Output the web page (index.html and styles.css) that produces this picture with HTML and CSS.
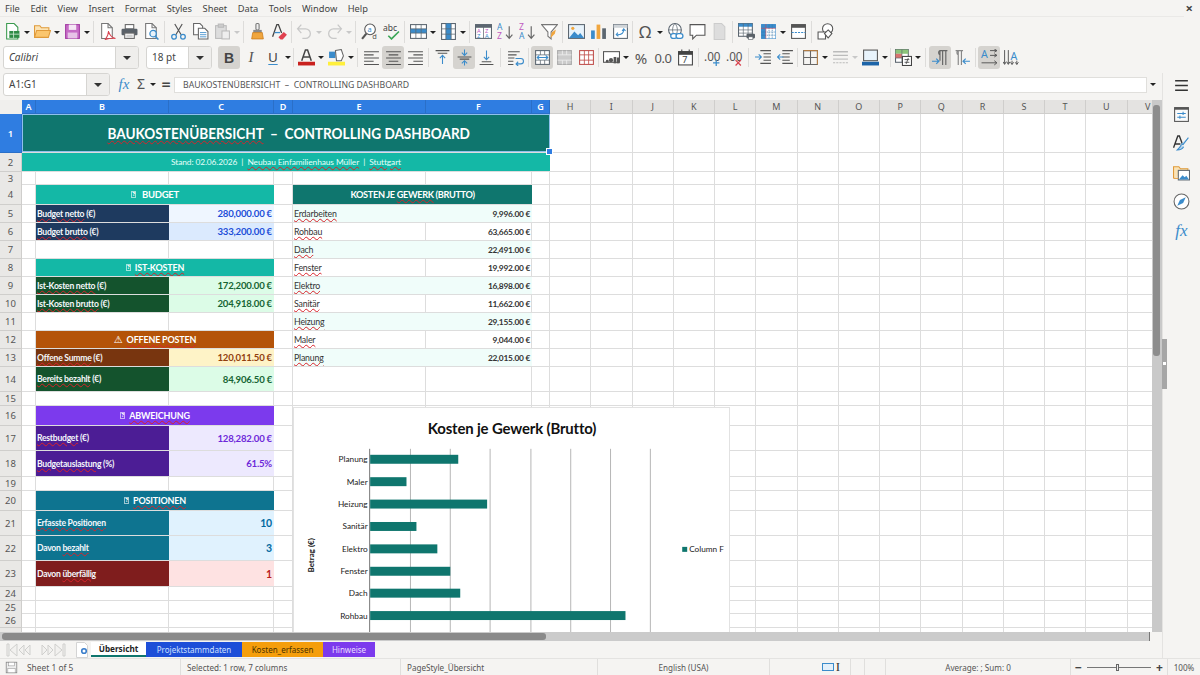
FILE: index.html
```html
<!DOCTYPE html>
<html lang="en">
<head>
  <meta charset="UTF-8">
  <meta name="viewport" content="width=device-width, initial-scale=1.0">
  <title>Baukostenübersicht - Calc</title>
  <link rel="stylesheet" href="styles.css">
</head>
<body>

  <!-- Icon set -->
  <svg class="defs" xmlns="http://www.w3.org/2000/svg">
    <symbol id="new" viewBox="0 0 16 16"><path d="M2.500 .5h7l3.500 3.500v11h-10.500z" fill="#fff" stroke="#3a9a4e"/><rect x="5" y="7.500" width="9.500" height="6.500" fill="#2e8b45"/><path d="M5 10.500h9.500M9 7.500v6.500" stroke="#cfe9d5" stroke-width=".8"/></symbol>
    <symbol id="open" viewBox="0 0 16 16"><path d="M.5 13.500v-11h5l1.500 2h7v3" fill="#fbe3b5" stroke="#e09a3a"/><path d="M.5 13.500l2-6.500h13l-2 6.500z" fill="#fbc66e" stroke="#e09a3a"/></symbol>
    <symbol id="save" viewBox="0 0 16 16"><rect x="1.500" y="1.500" width="13" height="13" fill="#c66cc6" stroke="#a33ea3"/><rect x="4.500" y="1.500" width="7" height="5" fill="#f5e6f5"/><rect x="3.500" y="9" width="9" height="5.500" fill="#e7c3e7"/></symbol>
    <symbol id="pdf" viewBox="0 0 16 16"><path d="M2.500 .5h6l4 4v10h-10z" fill="#fff" stroke="#777"/><path d="M8.500 .5v4h4" fill="none" stroke="#777"/><path d="M6 15.500c2-3 3-5 3-8 .5 3 3 6 6.500 7-3.500-.5-6.500 0-9.500 1z" fill="none" stroke="#d8434f"/></symbol>
    <symbol id="print" viewBox="0 0 16 16"><rect x="4" y="1.500" width="8" height="4" fill="#fff" stroke="#666"/><rect x=".5" y="5.500" width="15" height="6" rx="1" fill="#5a6168"/><rect x="3.500" y="9.500" width="9" height="5" fill="#fff" stroke="#666"/><path d="M5 11.500h6M5 13h6" stroke="#aaa" stroke-width=".7"/></symbol>
    <symbol id="prev" viewBox="0 0 16 16"><path d="M2.500 .5h6l4 4v10h-10z" fill="#fff" stroke="#777"/><path d="M8.500 .5v4h4" fill="none" stroke="#777"/><circle cx="9.500" cy="10" r="3" fill="#e8f3fb" stroke="#3b8ccb" stroke-width="1.200"/><path d="M11.500 12.500l3 3" stroke="#3b8ccb" stroke-width="1.500"/></symbol>
    <symbol id="cut" viewBox="0 0 16 16"><path d="M4.500 1l6 10M11.500 1l-6 10" stroke="#555" stroke-width="1.100"/><circle cx="3.800" cy="13" r="2.200" fill="none" stroke="#3b8ccb" stroke-width="1.200"/><circle cx="12.200" cy="13" r="2.200" fill="none" stroke="#3b8ccb" stroke-width="1.200"/></symbol>
    <symbol id="copy" viewBox="0 0 16 16"><path d="M1.500 .5h6l2.500 2.500v8h-8.500z" fill="#fff" stroke="#666"/><path d="M6 5h6l3 3v7h-9z" fill="#fff" stroke="#666"/><path d="M7.500 9h6M7.500 11h6M7.500 13h6" stroke="#3b8ccb" stroke-width=".8"/></symbol>
    <symbol id="paste" viewBox="0 0 16 16"><rect x="1.500" y="2.500" width="10" height="12" fill="#ddd" stroke="#bbb"/><rect x="4" y="1" width="5" height="3" fill="#ccc" stroke="#bbb"/><rect x="7.500" y="7.500" width="7" height="7.500" fill="#eee" stroke="#bbb"/></symbol>
    <symbol id="clone" viewBox="0 0 16 16"><rect x="6.500" y=".5" width="3" height="6" rx="1" fill="#eee" stroke="#777"/><rect x="4" y="6.500" width="8" height="2.500" fill="#8a8a8a"/><path d="M3.500 9h9l1 6h-11z" fill="#f0a63e" stroke="#c97a18" stroke-width=".7"/></symbol>
    <symbol id="clear" viewBox="0 0 16 16"><path d="M1.500 13l4-11.500h1.500l3 8" fill="none" stroke="#444" stroke-width="1.200"/><path d="M3.500 9h5" stroke="#3b8ccb" stroke-width="1.200"/><path d="M7 13.500l5-5 3 2.500-4 4.500H9z" fill="#e0414f"/></symbol>
    <symbol id="undo" viewBox="0 0 16 16"><path d="M5 1.500l-3.500 4 3.500 4M2 5.500h7a4.500 4.500 0 0 1 0 9H6" fill="none" stroke="#c8c8c8" stroke-width="1.200"/></symbol>
    <symbol id="redo" viewBox="0 0 16 16"><path d="M11 1.500l3.500 4-3.500 4M14 5.500H7a4.500 4.500 0 0 0 0 9h3" fill="none" stroke="#c8c8c8" stroke-width="1.200"/></symbol>
    <symbol id="find" viewBox="0 0 16 16"><circle cx="8.500" cy="6" r="5" fill="#fff" stroke="#555"/><path d="M5 10l-4 5" stroke="#555" stroke-width="2"/><text x="6.200" y="8.200" font-size="7" fill="#3b8ccb" font-family="Noto Sans">a</text><text x="10.500" y="15.500" font-size="7" fill="#555" font-family="Noto Sans">d</text></symbol>
    <symbol id="spell" viewBox="0 0 16 16"><text x="0" y="7.500" font-size="8" fill="#444" font-family="Noto Sans">abc</text><path d="M5 12l3 3 7-7" fill="none" stroke="#3aa655" stroke-width="1.500"/></symbol>
    <symbol id="row" viewBox="0 0 16 16"><rect x=".5" y="1.500" width="15" height="13" fill="#fff" stroke="#5c6670"/><rect x=".5" y="5.500" width="15" height="4" fill="#3b8ccb"/><path d="M.5 5.500h15M.5 9.500h15M5.500 1.500v13M10.500 1.500v13" stroke="#5c6670" stroke-width=".7"/></symbol>
    <symbol id="col" viewBox="0 0 16 16"><rect x="1.500" y=".5" width="13" height="15" fill="#fff" stroke="#5c6670"/><rect x="5.500" y=".5" width="5" height="15" fill="#3b8ccb"/><path d="M1.500 5.500h13M1.500 10.500h13M5.500 .5v15M10.500 .5v15" stroke="#5c6670" stroke-width=".7"/></symbol>
    <symbol id="sort" viewBox="0 0 16 16"><rect x=".5" y="1.500" width="15" height="13" fill="#fff" stroke="#5c6670"/><rect x=".5" y="1.500" width="15" height="3" fill="#5c6670"/><path d="M8 1.500v13" stroke="#5c6670" stroke-width=".7"/><text x="1.800" y="9.500" font-size="5.500" fill="#c05ac0" font-family="Noto Sans">A</text><text x="9.300" y="9.500" font-size="5.500" fill="#c05ac0" font-family="Noto Sans">Z</text><text x="1.800" y="14" font-size="5.500" fill="#3b8ccb" font-family="Noto Sans">Z</text><text x="9.300" y="14" font-size="5.500" fill="#3b8ccb" font-family="Noto Sans">A</text></symbol>
    <symbol id="asc" viewBox="0 0 16 16"><text x="0" y="7" font-size="8" fill="#3b8ccb" font-family="Noto Sans">A</text><text x="0" y="15.500" font-size="8" fill="#c05ac0" font-family="Noto Sans">Z</text><path d="M11.500 3v11M8.500 11l3 3.500 3-3.500" fill="none" stroke="#666" stroke-width="1.100"/></symbol>
    <symbol id="desc" viewBox="0 0 16 16"><text x="0" y="7" font-size="8" fill="#c05ac0" font-family="Noto Sans">Z</text><text x="0" y="15.500" font-size="8" fill="#3b8ccb" font-family="Noto Sans">A</text><path d="M11.500 3v11M8.500 11l3 3.500 3-3.500" fill="none" stroke="#666" stroke-width="1.100"/></symbol>
    <symbol id="filter" viewBox="0 0 16 16"><path d="M.5 1.500h15l-6 7v6.500l-3-2.500v-4z" fill="#fff" stroke="#777"/><path d="M9 14l1-5 4-3-1 4z" fill="#f0a63e"/></symbol>
    <symbol id="image" viewBox="0 0 16 16"><rect x=".5" y="1.500" width="15" height="13" fill="#e8f3fb" stroke="#5c6670"/><circle cx="4.500" cy="5" r="1.500" fill="#f0a63e"/><path d="M1 14l5-6 3.500 3.500 2-2 3.500 4.500z" fill="#3b8ccb"/></symbol>
    <symbol id="chart" viewBox="0 0 16 16"><rect x="1" y="7" width="3.500" height="8" fill="#3b8ccb"/><rect x="6.200" y="1.500" width="3.500" height="13.500" fill="#f0a63e"/><rect x="11.500" y="5" width="3.500" height="10" fill="#5c6670"/></symbol>
    <symbol id="pivot" viewBox="0 0 16 16"><rect x="1.500" y="1.500" width="13" height="13" fill="#fff" stroke="#5c6670"/><rect x="1.500" y="1.500" width="13" height="3" fill="#cfd4d8"/><path d="M5 11c4 0 6-2 6-5M9.500 7.500L11 5.500l1.700 2M5.500 9l-1.500 2 2 1.500" fill="none" stroke="#3b8ccb"/></symbol>
    <symbol id="link" viewBox="0 0 16 16"><circle cx="7.500" cy="6.500" r="6" fill="#fff" stroke="#5c6670"/><path d="M1.500 6.500h12M7.500 .5c-3 3-3 9 0 12M7.500 .5c3 3 3 9 0 12" fill="none" stroke="#5c6670" stroke-width=".7"/><rect x="3.500" y="10" width="6" height="4.500" rx="2.200" fill="#fff" stroke="#3b8ccb" stroke-width="1.200"/><rect x="8.500" y="10" width="6.500" height="4.500" rx="2.200" fill="#fff" stroke="#3b8ccb" stroke-width="1.200"/></symbol>
    <symbol id="note" viewBox="0 0 16 16"><path d="M1 1.500h14v10H7l-3.500 3.500v-3.500H1z" fill="#fff" stroke="#555"/></symbol>
    <symbol id="hdr" viewBox="0 0 16 16"><path d="M3 .5h7l3 3v12H3z" fill="#ddd" stroke="#ccc"/></symbol>
    <symbol id="area" viewBox="0 0 16 16"><rect x=".5" y=".5" width="13" height="12" fill="#fff" stroke="#5c6670"/><rect x=".5" y=".5" width="13" height="3" fill="#3b8ccb"/><path d="M.5 6.500h13M.5 9.500h13M5 .5v12M9.500 .5v12" stroke="#5c6670" stroke-width=".6"/><rect x="8" y="10" width="8" height="4.500" rx="1" fill="#5a6168"/><rect x="10" y="13" width="4" height="2.500" fill="#fff" stroke="#5a6168" stroke-width=".6"/></symbol>
    <symbol id="freeze" viewBox="0 0 16 16"><rect x="1.500" y="1.500" width="13" height="13" fill="#3b8ccb" stroke="#3b8ccb"/><rect x="5.500" y="5" width="9" height="9.500" fill="#fff"/><path d="M1.500 8.500h13M1.500 11.500h13M8.500 1.500v13M11.500 1.500v13" stroke="#2a6ea3" stroke-width=".6" stroke-dasharray="1 .7"/><path d="M1 5h14M5.500 1v14" stroke="#d8434f" stroke-width=".7" opacity=".7"/></symbol>
    <symbol id="split" viewBox="0 0 16 16"><rect x="1.500" y="1.500" width="13" height="13" fill="#fff" stroke="#555"/><rect x="1.500" y="1.500" width="13" height="3" fill="#555"/><path d="M1.500 9h13" stroke="#3b8ccb" stroke-dasharray="2 1"/></symbol>
    <symbol id="shapes" viewBox="0 0 16 16"><circle cx="10" cy="5.500" r="4.800" fill="#fff" stroke="#555"/><path d="M1 8.500h7v6.500H1z" fill="#fff" stroke="#555"/><path d="M10.500 6.500l3.500 3.500-3.500 4-3.500-4z" fill="#fff" stroke="#555"/></symbol>

    <symbol id="fcolor" viewBox="0 0 16 16"><path d="M3.500 11l3.500-10h2l3.500 10M5 7.500h6" fill="none" stroke="#444" stroke-width="1.400"/><rect x="0" y="12" width="16" height="3.500" fill="#c9211e"/></symbol>
    <symbol id="bcolor" viewBox="0 0 16 16"><rect x="0" y="12" width="16" height="3.500" fill="#ffef3b"/><rect x="1" y="2.500" width="6" height="6" fill="#3b8ccb"/><path d="M7 1.500l5.500-1 2 6-2 4.500H8z" fill="#fff" stroke="#666"/></symbol>
    <symbol id="al" viewBox="0 0 16 16"><path d="M1 2.500h14M1 5.500h9M1 8.500h14M1 11.500h9M1 14.500h14" stroke="#555"/></symbol>
    <symbol id="ac" viewBox="0 0 16 16"><path d="M1 2.500h14M3.500 5.500h9M1 8.500h14M3.500 11.500h9M1 14.500h14" stroke="#555"/></symbol>
    <symbol id="ar" viewBox="0 0 16 16"><path d="M1 2.500h14M6 5.500h9M1 8.500h14M6 11.500h9M1 14.500h14" stroke="#555"/></symbol>
    <symbol id="vt" viewBox="0 0 16 16"><path d="M1.500 1.500h13M3.500 4h9" stroke="#555"/><path d="M8 14V6M5.500 8.500L8 6l2.500 2.500" fill="none" stroke="#3b8ccb"/></symbol>
    <symbol id="vc" viewBox="0 0 16 16"><path d="M1.500 7.500h13M3.500 9.500h9" stroke="#555"/><path d="M8 .5v5M5.500 3.500L8 6l2.500-2.500M8 15.500v-4.500M5.500 13.500L8 11l2.500 2.500" fill="none" stroke="#3b8ccb"/></symbol>
    <symbol id="vb" viewBox="0 0 16 16"><path d="M1.500 14.500h13M3.500 12h9" stroke="#555"/><path d="M8 1.500v8M5.500 7.500L8 10l2.500-2.500" fill="none" stroke="#3b8ccb"/></symbol>
    <symbol id="wrap" viewBox="0 0 16 16"><path d="M1 2.500h11M1 5.500h8M1 8.500h6M1 11.500h5M1 14.500h5" stroke="#555"/><path d="M8 9h5a2.500 2.500 0 0 1 0 5H8.500M10.500 12l-2 2 2 2" fill="none" stroke="#3b8ccb"/></symbol>
    <symbol id="merge" viewBox="0 0 16 16"><rect x="1.500" y="1.500" width="13" height="13" fill="#fff" stroke="#5c6670"/><path d="M1.500 5.500h13M1.500 10.500h13M6 1.500v4M10 1.500v4M6 10.500v4M10 10.500v4" stroke="#5c6670" stroke-width=".7"/><path d="M3 8h10M5 6l-2 2 2 2M11 6l2 2-2 2" fill="none" stroke="#3b8ccb"/></symbol>
    <symbol id="merge2" viewBox="0 0 16 16"><rect x="1.500" y="1.500" width="13" height="13" fill="#ccc" stroke="#aaa"/><path d="M1.500 5.500h13M1.500 10.500h13M6 1.500v4M10 1.500v4M6 10.500v4M10 10.500v4" stroke="#eee" stroke-width=".8"/></symbol>
    <symbol id="unmerge" viewBox="0 0 16 16"><rect x="1.500" y="1.500" width="13" height="13" fill="#fff" stroke="#c0504d"/><path d="M1.500 5.500h13M1.500 10.500h13M6 1.500v13M10 1.500v13" stroke="#c0504d" stroke-width=".8"/></symbol>
    <symbol id="money" viewBox="0 0 16 16"><rect x=".5" y="2.500" width="15" height="10" fill="#fff" stroke="#555"/><circle cx="7.500" cy="10.500" r="2" fill="#555"/><rect x="10" y="7.500" width="2.500" height="6" fill="#555"/><rect x="13" y="8" width="2.500" height="5.500" fill="#555"/><circle cx="4" cy="11.500" r="1.300" fill="#555"/></symbol>
    <symbol id="date" viewBox="0 0 16 16"><rect x="1.500" y="2.500" width="13" height="12.500" fill="#fff" stroke="#444"/><path d="M1.500 2.500h13v2.500h-13zM4.500 .5v3M11.500 .5v3" fill="#444" stroke="#444"/><text x="5" y="13.500" font-size="8.500" fill="#444" font-family="Noto Sans">7</text></symbol>
    <symbol id="addd" viewBox="0 0 16 16"><text x="0" y="11" font-size="11" fill="#555" font-family="Noto Sans">.00</text><path d="M11.500 10v6M8.500 13h6" stroke="#3b8ccb" stroke-width="1.200"/></symbol>
    <symbol id="deld" viewBox="0 0 16 16"><text x="0" y="11" font-size="11" fill="#555" font-family="Noto Sans">.00</text><path d="M9 10.500l5 5M14 10.500l-5 5" stroke="#d8434f" stroke-width="1.200"/></symbol>
    <symbol id="ind" viewBox="0 0 16 16"><path d="M5 1.500h10M8 4.500h7M8 7.500h7M8 10.500h7M5 13.500h10" stroke="#555"/><path d="M0 7.500h5.500M3.500 5l2.500 2.500-2.500 2.500" fill="none" stroke="#3b8ccb"/></symbol>
    <symbol id="outd" viewBox="0 0 16 16"><path d="M1 1.500h10M1 4.500h7M1 7.500h7M1 10.500h7M1 13.500h10" stroke="#555" transform="translate(4 0)"/><path d="M6 7.500H.5M3 5L.5 7.500 3 10" fill="none" stroke="#3b8ccb"/></symbol>
    <symbol id="border" viewBox="0 0 16 16"><path d="M1.500 1.500h13v13h-13zM8 1.500v13M1.500 8h13" fill="none" stroke="#666"/><path d="M1.500 1.500h13M14.500 1.500v13" fill="none" stroke="#c9833a" stroke-width=".8"/></symbol>
    <symbol id="lines" viewBox="0 0 16 16"><path d="M1 2.500h14M1 6h14" stroke="#bbb" stroke-width="1.400"/><path d="M1 9.500h14" stroke="#bbb"/><path d="M1 13h14" stroke="#bbb" stroke-dasharray="2 1"/></symbol>
    <symbol id="bordc" viewBox="0 0 16 16"><rect x="1.500" y="1" width="13" height="10" fill="#e8f3fb" stroke="#555"/><rect x="0" y="12" width="16" height="3.500" fill="#1c64a8"/></symbol>
    <symbol id="cond" viewBox="0 0 16 16"><rect x=".5" y=".5" width="12" height="12" fill="#fff" stroke="#5c6670"/><rect x=".5" y=".5" width="12" height="4" fill="#8cc47a"/><rect x=".5" y="4.500" width="6" height="4" fill="#d8746e"/><path d="M.5 8.500h12M6.500 .5v12" stroke="#5c6670" stroke-width=".6"/><rect x="7" y="7" width="8.500" height="8.500" fill="#fff" stroke="#444"/><path d="M9 10h4.500M9 12.500h4.500M12.500 8.500l-2 5.500" stroke="#444" stroke-width=".8"/></symbol>
    <symbol id="ltr" viewBox="0 0 16 16"><path d="M7.500 11V1.500h7M7.500 5.500a2.200 2.200 0 0 1 0-4M10 1.500V15M13 1.500V15" fill="none" stroke="#666" stroke-width="1.100"/><path d="M0 11.500h6M4 9l2.500 2.500L4 14" fill="none" stroke="#3b8ccb" stroke-width="1.100"/></symbol>
    <symbol id="rtl" viewBox="0 0 16 16"><path d="M1.500 1.500h7M4 5.500a2.200 2.200 0 0 1 0-4M4 1.500V15M7 1.500V15" fill="none" stroke="#888" stroke-width="1.100"/><path d="M15 11.500H9M11 9l-2.500 2.500L11 14" fill="none" stroke="#3b8ccb" stroke-width="1.100"/></symbol>
    <symbol id="lr" viewBox="0 0 16 16"><text x="0" y="8.500" font-size="10" fill="#3b8ccb" font-family="Noto Sans">A</text><path d="M8.500 1.500h6.500M12.500 0l2.500 1.500-2.500 1.500M8.500 6h6.500M12.500 4.500l2.500 1.500-2.500 1.500M.5 13h14M12.500 11l2.500 2-2.500 2" fill="none" stroke="#555" stroke-width=".9"/></symbol>
    <symbol id="tb" viewBox="0 0 16 16"><text x="7" y="10" font-size="10" fill="#3b8ccb" font-family="Noto Sans">A</text><path d="M1.500 1v13M0 12l1.500 2.500L3 12M5 1v13M3.500 12l1.500 2.500L6.500 12M8.500 11v3.500M7 12.500l1.500 2 1.500-2M13 11v3.500M11.500 12.500l1.500 2 1.500-2" fill="none" stroke="#555" stroke-width=".9"/></symbol>

    <symbol id="menu3" viewBox="0 0 16 16"><path d="M2 3.500h12M2 8h12M2 12.500h12" stroke="#333" stroke-width="1.500"/></symbol>
    <symbol id="props" viewBox="0 0 16 16"><rect x="1.500" y="1.500" width="13" height="13" fill="#fafafa" stroke="#555"/><rect x="1.500" y="1.500" width="13" height="2" fill="#555"/><path d="M4 7h8M4 10.500h8" stroke="#3b8ccb"/><path d="M9.500 5.500v3M6.500 9v3" stroke="#3b8ccb"/></symbol>
    <symbol id="styl" viewBox="0 0 16 16"><path d="M.5 12L4.500 1h1.500l3 8M2 8.500h5" fill="none" stroke="#333" stroke-width="1.300"/><path d="M14.500 2.500L9.500 9 8 8M8 9c-1 2-1.500 3-4 5 3 0 5-1 6-3" fill="#b9d6ee" stroke="#3b8ccb"/></symbol>
    <symbol id="gall" viewBox="0 0 16 16"><path d="M.5 13.500v-11h5l1.500 2h7v3" fill="#fbe3b5" stroke="#e09a3a"/><rect x="5" y="6" width="10.500" height="9" fill="#fff" stroke="#5c6670"/><path d="M5.500 14.500l3.500-4 2 2 1.500-1.500 2.500 3.500z" fill="#3b8ccb"/><path d="M.5 13.500H5" stroke="#e09a3a"/></symbol>
    <symbol id="navi" viewBox="0 0 16 16"><circle cx="8" cy="8" r="7" fill="#fff" stroke="#666"/><path d="M12 4L9.500 9.500 4 12l2.500-5.500z" fill="#3b8ccb"/></symbol>
    <symbol id="stsave" viewBox="0 0 16 16"><rect x="1.500" y="1.500" width="13" height="13" fill="#eee" stroke="#888"/><rect x="4.500" y="1.500" width="7" height="4.500" fill="#fff" stroke="#888" stroke-width=".6"/><rect x="3.500" y="9" width="9" height="5.500" fill="#fff" stroke="#888" stroke-width=".6"/></symbol>
    <symbol id="addtab" viewBox="0 0 16 16"><path d="M2.500 .5h8l3 3v12h-11z" fill="#fff" stroke="#d4d4d4"/><circle cx="10" cy="9" r="2.300" fill="#fff" stroke="#3b7ecb" stroke-width="1.600"/></symbol>
    <symbol id="tabnav" viewBox="0 0 60 14"><g fill="#f2f1ef" stroke="#cfcfcd"><path d="M1 1h2v12H1zM11 1L4 7l7 6z"/><path d="M18 2l-5 5 5 5zM24 2l-5 5 5 5z"/><path d="M36 2l5 5-5 5zM42 2l5 5-5 5z"/><path d="M49 1l7 6-7 6zM57 1h2v12h-2z"/></g></symbol>
  </svg>

  <!-- Menu bar -->
  <div class="menubar">
    <span>File</span><span>Edit</span><span>View</span><span>Insert</span><span>Format</span><span>Styles</span><span>Sheet</span><span>Data</span><span>Tools</span><span>Window</span><span>Help</span>
    <span class="close">×</span>
  </div>

  <!-- Standard toolbar -->
  <div class="toolbar tb1">
    <span class="b"><svg><use href="#new"/></svg></span><span class="d"></span>
    <span class="b"><svg><use href="#open"/></svg></span><span class="d"></span>
    <span class="b"><svg><use href="#save"/></svg></span><span class="d"></span>
    <span class="s"></span>
    <span class="b"><svg><use href="#pdf"/></svg></span>
    <span class="b"><svg><use href="#print"/></svg></span>
    <span class="b"><svg><use href="#prev"/></svg></span>
    <span class="s"></span>
    <span class="b"><svg><use href="#cut"/></svg></span>
    <span class="b"><svg><use href="#copy"/></svg></span>
    <span class="b"><svg><use href="#paste"/></svg></span><span class="d off"></span>
    <span class="s"></span>
    <span class="b"><svg><use href="#clone"/></svg></span>
    <span class="b"><svg><use href="#clear"/></svg></span>
    <span class="s t"></span>
    <span class="b"><svg><use href="#undo"/></svg></span><span class="d off"></span>
    <span class="b"><svg><use href="#redo"/></svg></span><span class="d off"></span>
    <span class="s"></span>
    <span class="b"><svg><use href="#find"/></svg></span>
    <span class="b"><svg><use href="#spell"/></svg></span>
    <span class="s"></span>
    <span class="b"><svg><use href="#row"/></svg></span><span class="d"></span>
    <span class="b"><svg><use href="#col"/></svg></span><span class="d"></span>
    <span class="s"></span>
    <span class="b"><svg><use href="#sort"/></svg></span>
    <span class="b"><svg><use href="#asc"/></svg></span>
    <span class="b"><svg><use href="#desc"/></svg></span>
    <span class="b"><svg><use href="#filter"/></svg></span>
    <span class="s"></span>
    <span class="b"><svg><use href="#image"/></svg></span>
    <span class="b"><svg><use href="#chart"/></svg></span>
    <span class="b"><svg><use href="#pivot"/></svg></span>
    <span class="s t"></span>
    <span class="b omega">Ω</span><span class="d"></span>
    <span class="b"><svg><use href="#link"/></svg></span>
    <span class="b"><svg><use href="#note"/></svg></span>
    <span class="b"><svg><use href="#hdr"/></svg></span>
    <span class="s"></span>
    <span class="b"><svg><use href="#area"/></svg></span>
    <span class="b"><svg><use href="#freeze"/></svg></span><span class="d"></span>
    <span class="b"><svg><use href="#split"/></svg></span>
    <span class="s"></span>
    <span class="b"><svg><use href="#shapes"/></svg></span>
  </div>

  <!-- Formatting toolbar -->
  <div class="toolbar tb2">
    <span class="combo font"><i>Calibri</i><em></em></span>
    <span class="combo size"><i class="plain">18 pt</i><em></em></span>
    <span class="b on bold">B</span>
    <span class="b ital">I</span>
    <span class="b under">U</span><span class="d"></span>
    <span class="s t"></span>
    <span class="b"><svg><use href="#fcolor"/></svg></span><span class="d"></span>
    <span class="b"><svg><use href="#bcolor"/></svg></span><span class="d"></span>
    <span class="s"></span>
    <span class="b"><svg><use href="#al"/></svg></span>
    <span class="b on"><svg><use href="#ac"/></svg></span>
    <span class="b"><svg><use href="#ar"/></svg></span>
    <span class="s"></span>
    <span class="b"><svg><use href="#vt"/></svg></span>
    <span class="b on"><svg><use href="#vc"/></svg></span>
    <span class="b"><svg><use href="#vb"/></svg></span>
    <span class="s w"></span>
    <span class="b"><svg><use href="#wrap"/></svg></span>
    <span class="s"></span>
    <span class="b on"><svg><use href="#merge"/></svg></span>
    <span class="b"><svg><use href="#merge2"/></svg></span>
    <span class="b"><svg><use href="#unmerge"/></svg></span>
    <span class="s t"></span>
    <span class="b"><svg><use href="#money"/></svg></span><span class="d"></span>
    <span class="b percent">%</span>
    <span class="b zero">0.0</span>
    <span class="b"><svg><use href="#date"/></svg></span>
    <span class="s"></span>
    <span class="b"><svg><use href="#addd"/></svg></span>
    <span class="b"><svg><use href="#deld"/></svg></span>
    <span class="s w"></span>
    <span class="b"><svg><use href="#ind"/></svg></span>
    <span class="b"><svg><use href="#outd"/></svg></span>
    <span class="s t"></span>
    <span class="b"><svg><use href="#border"/></svg></span><span class="d"></span>
    <span class="b"><svg><use href="#lines"/></svg></span><span class="d off"></span>
    <span class="b"><svg><use href="#bordc"/></svg></span><span class="d"></span>
    <span class="s t"></span>
    <span class="b"><svg><use href="#cond"/></svg></span><span class="d"></span>
    <span class="s w"></span>
    <span class="b on"><svg><use href="#ltr"/></svg></span>
    <span class="b"><svg><use href="#rtl"/></svg></span>
    <span class="s"></span>
    <span class="b on"><svg><use href="#lr"/></svg></span>
    <span class="b"><svg><use href="#tb"/></svg></span>
  </div>

  <div class="work">
    <div class="main">

      <!-- Formula bar -->
      <div class="formula">
        <span class="combo name"><i class="plain">A1:G1</i><em></em></span>
        <span class="f-fx">fx</span>
        <span class="f-sum">Σ</span><span class="d"></span>
        <span class="f-eq">=</span>
        <span class="f-input">BAUKOSTENÜBERSICHT  –  CONTROLLING DASHBOARD</span>
        <span class="d f-more"></span>
      </div>

      <!-- Sheet -->
      <div class="sheet-wrap">
        <div class="sheet">
          <div class="row colhead">
            <div class="corner"></div>
            <div class="ch sel">A</div><div class="ch sel">B</div><div class="ch sel">C</div><div class="ch sel">D</div><div class="ch sel">E</div><div class="ch sel">F</div><div class="ch sel">G</div>
            <div class="ch">H</div><div class="ch">I</div><div class="ch">J</div><div class="ch">K</div><div class="ch">L</div><div class="ch">M</div><div class="ch">N</div><div class="ch">O</div><div class="ch">P</div><div class="ch">Q</div><div class="ch">R</div><div class="ch">S</div><div class="ch">T</div><div class="ch">U</div><div class="ch">V</div>
          </div>

          <div class="row h39">
            <div class="rh sel">1</div>
            <div class="cell span-ag title"><span class="narrow"><span class="sp">BAUKOSTENÜBERSICHT</span>  –  CONTROLLING DASHBOARD</span></div>
          </div>
          <div class="row h19">
            <div class="rh">2</div>
            <div class="cell span-ag sub">Stand: 02.06.2026  |  <span class="sp">Neubau Einfamilienhaus Müller</span>  |  <span class="sp">Stuttgart</span></div>
          </div>
          <div class="row h13"><div class="rh">3</div></div>
          <div class="row h20">
            <div class="rh">4</div>
            <div class="cell span-bc head teal"><b class="tofu">?</b> BUDGET</div>
            <div class="cell span-ef head dteal small2"><span>KOSTEN JE <span class="sp">GEWERK</span> (BRUTTO)</span></div>
          </div>
          <div class="row">
            <div class="rh">5</div>
            <div class="cell col-b lab navy"><span class="sp">Budget netto</span> (€)</div>
            <div class="cell col-c val blue1">280,000.00 €</div>
            <div class="cell col-e item mint"><span class="sp">Erdarbeiten</span></div>
            <div class="cell col-f amt mint">9,996.00 €</div>
          </div>
          <div class="row">
            <div class="rh">6</div>
            <div class="cell col-b lab navy"><span class="sp">Budget brutto</span> (€)</div>
            <div class="cell col-c val blue2">333,200.00 €</div>
            <div class="cell col-e item"><span class="sp">Rohbau</span></div>
            <div class="cell col-f amt">63,665.00 €</div>
          </div>
          <div class="row">
            <div class="rh">7</div>
            <div class="cell col-e item mint"><span class="sp">Dach</span></div>
            <div class="cell col-f amt mint">22,491.00 €</div>
          </div>
          <div class="row">
            <div class="rh">8</div>
            <div class="cell span-bc head teal small"><b class="tofu">?</b> <span class="sp">IST-KOSTEN</span></div>
            <div class="cell col-e item"><span class="sp">Fenster</span></div>
            <div class="cell col-f amt">19,992.00 €</div>
          </div>
          <div class="row">
            <div class="rh">9</div>
            <div class="cell col-b lab forest"><span class="sp">Ist-Kosten netto</span> (€)</div>
            <div class="cell col-c val green">172,200.00 €</div>
            <div class="cell col-e item mint"><span class="sp">Elektro</span></div>
            <div class="cell col-f amt mint">16,898.00 €</div>
          </div>
          <div class="row">
            <div class="rh">10</div>
            <div class="cell col-b lab forest"><span class="sp">Ist-Kosten brutto</span> (€)</div>
            <div class="cell col-c val green">204,918.00 €</div>
            <div class="cell col-e item"><span class="sp">Sanitär</span></div>
            <div class="cell col-f amt">11,662.00 €</div>
          </div>
          <div class="row">
            <div class="rh">11</div>
            <div class="cell col-e item mint"><span class="sp">Heizung</span></div>
            <div class="cell col-f amt mint">29,155.00 €</div>
          </div>
          <div class="row">
            <div class="rh">12</div>
            <div class="cell span-bc head amber small"><span class="warn">⚠</span> <span class="sp">OFFENE POSTEN</span></div>
            <div class="cell col-e item"><span class="sp">Maler</span></div>
            <div class="cell col-f amt">9,044.00 €</div>
          </div>
          <div class="row">
            <div class="rh">13</div>
            <div class="cell col-b lab brown"><span class="sp">Offene Summe</span> (€)</div>
            <div class="cell col-c val cream">120,011.50 €</div>
            <div class="cell col-e item mint"><span class="sp">Planung</span></div>
            <div class="cell col-f amt mint">22,015.00 €</div>
          </div>
          <div class="row h25">
            <div class="rh">14</div>
            <div class="cell col-b lab forest"><span class="sp">Bereits bezahlt</span> (€)</div>
            <div class="cell col-c val green">84,906.50 €</div>
          </div>
          <div class="row h14"><div class="rh">15</div></div>
          <div class="row h20">
            <div class="rh">16</div>
            <div class="cell span-bc head violet small"><b class="tofu">?</b> <span class="sp">ABWEICHUNG</span></div>
          </div>
          <div class="row h25">
            <div class="rh">17</div>
            <div class="cell col-b lab purple"><span class="sp">Restbudget</span> (€)</div>
            <div class="cell col-c val lilac">128,282.00 €</div>
          </div>
          <div class="row h26">
            <div class="rh">18</div>
            <div class="cell col-b lab purple"><span class="sp">Budgetauslastung</span> (%)</div>
            <div class="cell col-c val lilac">61.5%</div>
          </div>
          <div class="row h14"><div class="rh">19</div></div>
          <div class="row h20">
            <div class="rh">20</div>
            <div class="cell span-bc head ocean small"><b class="tofu">?</b> <span class="sp">POSITIONEN</span></div>
          </div>
          <div class="row h25">
            <div class="rh">21</div>
            <div class="cell col-b lab ocean"><span class="sp">Erfasste Positionen</span></div>
            <div class="cell col-c val sky big">10</div>
          </div>
          <div class="row h25">
            <div class="rh">22</div>
            <div class="cell col-b lab ocean">Davon <span class="sp">bezahlt</span></div>
            <div class="cell col-c val sky big">3</div>
          </div>
          <div class="row h26">
            <div class="rh">23</div>
            <div class="cell col-b lab wine">Davon <span class="sp">überfällig</span></div>
            <div class="cell col-c val rose big">1</div>
          </div>
          <div class="row h14"><div class="rh">24</div></div>
          <div class="row h13"><div class="rh">25</div></div>
          <div class="row h14"><div class="rh">26</div></div>
          <div class="row h14"><div class="rh"></div></div>

          <!-- Chart object floating over the cells -->
          <svg class="chart" viewBox="293 407 437 225" xmlns="http://www.w3.org/2000/svg">
            <text class="c-title" x="512" y="433" text-anchor="middle">Kosten je Gewerk (Brutto)</text>
            <g class="c-grid">
              <path d="M410 448v184M450 448v184M490 448v184M531 448v184M571 448v184M611 448v184M651 448v184"/>
            </g>
            <path class="c-axis" d="M369 448v184"/>
            <g class="c-bar">
              <rect x="369.500" y="454" width="88.500" height="9"/>
              <rect x="369.500" y="476.500" width="36.500" height="9"/>
              <rect x="369.500" y="499" width="117.500" height="9"/>
              <rect x="369.500" y="521.500" width="46.500" height="9"/>
              <rect x="369.500" y="544" width="67.500" height="9"/>
              <rect x="369.500" y="566.500" width="80.500" height="9"/>
              <rect x="369.500" y="588.500" width="90.500" height="9"/>
              <rect x="369.500" y="611" width="256.500" height="9"/>
            </g>
            <g class="c-label" text-anchor="end">
              <text x="367" y="461.500">Planung</text>
              <text x="367" y="484">Maler</text>
              <text x="367" y="506.500">Heizung</text>
              <text x="367" y="529">Sanitär</text>
              <text x="367" y="551.500">Elektro</text>
              <text x="367" y="574">Fenster</text>
              <text x="367" y="596">Dach</text>
              <text x="367" y="618.500">Rohbau</text>
            </g>
            <text class="c-ytitle" transform="translate(313 555) rotate(-90)" text-anchor="middle">Betrag (€)</text>
            <rect class="c-key" x="683" y="546.500" width="5" height="5"/>
            <text class="c-label" x="690" y="552">Column F</text>
          </svg>
        </div>
        <div class="vscroll"><div class="vthumb"></div></div>
      </div>

      <!-- Horizontal scrollbar -->
      <div class="hscroll"><div class="hthumb"></div></div>

      <!-- Sheet tabs -->
      <div class="tabs">
        <svg class="tabnav"><use href="#tabnav"/></svg>
        <svg class="addtab"><use href="#addtab"/></svg>
        <span class="tab t-cur">Übersicht</span>
        <span class="tab t-blue">Projektstammdaten</span>
        <span class="tab t-orange">Kosten_erfassen</span>
        <span class="tab t-purple">Hinweise</span>
      </div>
    </div>

    <!-- Sidebar -->
    <div class="sidebar">
      <svg><use href="#menu3"/></svg>
      <svg><use href="#props"/></svg>
      <svg><use href="#styl"/></svg>
      <svg><use href="#gall"/></svg>
      <svg><use href="#navi"/></svg>
      <span class="side-fx">fx</span>
      <div class="grip"></div>
    </div>
  </div>

  <!-- Status bar -->
  <div class="status">
    <div class="st st1"><svg><use href="#stsave"/></svg>Sheet 1 of 5</div>
    <div class="st st2">Selected: 1 row, 7 columns</div>
    <div class="st st3">PageStyle_Übersicht</div>
    <div class="st st4">English (USA)</div>
    <div class="st st5"><span class="insbox"></span><span class="cursor">I</span></div>
    <div class="st st6"></div>
    <div class="st st7"></div>
    <div class="st st8">Average: ; Sum: 0</div>
    <div class="st st9"><span class="zm">−</span><span class="slider"><i></i></span><span class="zm">+</span></div>
    <div class="st st10">100%</div>
  </div>

</body>
</html>
```
FILE: styles.css
```css
* {
  box-sizing: border-box;
}

html, body {
  margin: 0;
  padding: 0;
  width: 1200px;
  height: 675px;
  overflow: hidden;
}

body {
  background-color: #f5f4f2;
  color: #333;
  font-family: "Noto Sans", sans-serif;
  font-size: 10px;
  display: flex;
  flex-direction: column;
}

.defs {
  display: none;
}

/* Menu bar */
.menubar {
  height: 16px;
  display: flex;
  align-items: center;
  padding-left: 5px;
  gap: 10.500px;
  font-size: 9.300px;
  color: #444;
}

.close {
  margin-left: auto;
  margin-right: 7px;
  font-size: 13px;
  font-weight: bold;
}

/* Toolbars */
.toolbar {
  display: flex;
  align-items: center;
  flex: none;
}

.tb1 {
  height: 30px;
  padding-left: 1px;
  border-top: 1px solid #eae9e7;
  margin-right: 16px;
}

.tb2 {
  height: 27px;
  align-items: flex-start;
  padding-left: 3px;
}

.b {
  width: 22px;
  height: 23px;
  flex: none;
  display: flex;
  align-items: center;
  justify-content: center;
}

.b svg {
  width: 17px;
  height: 17px;
}

.on {
  background-color: #d5d3cf;
  border-radius: 3px;
}

.d {
  width: 8px;
  height: 23px;
  flex: none;
  position: relative;
}

.d::after {
  content: "";
  position: absolute;
  left: 1px;
  top: 10px;
  border-top: 3.500px solid #222;
  border-left: 3px solid transparent;
  border-right: 3px solid transparent;
}

.d.off::after {
  border-top-color: #c8c8c8;
}

.s {
  width: 5px;
  height: 23px;
  flex: none;
  position: relative;
}

.s::after {
  content: "";
  position: absolute;
  left: 2px;
  top: 2px;
  bottom: 2px;
  width: 1px;
  background-color: #dddcda;
}

.s.t {
  width: 3px;
}

.s.t::after {
  left: 1px;
}

.s.w {
  width: 7px;
}

.s.w::after {
  left: 3px;
}

.tb1 .b,
.tb1 .d,
.tb1 .s {
  height: 26px;
}

.tb1 .d::after {
  top: 12px;
}

.omega {
  font-size: 17px;
  color: #555;
}

.bold {
  font-family: "Liberation Sans", sans-serif;
  font-weight: bold;
  font-size: 14px;
  color: #444;
}

.ital {
  font-family: "Liberation Serif", serif;
  font-style: italic;
  font-size: 15px;
  color: #555;
}

.under {
  font-family: "Liberation Sans", sans-serif;
  font-size: 13px;
  color: #444;
  text-decoration: underline;
  text-decoration-color: #3b8ccb;
  text-underline-offset: 2px;
}

.percent {
  font-size: 15px;
  color: #555;
}

.zero {
  font-size: 13px;
  letter-spacing: -.5px;
  color: #555;
}

/* Combo boxes */
.combo {
  display: flex;
  height: 23px;
  background-color: #fff;
  border: 1px solid #d6d5d2;
  border-radius: 3px;
  flex: none;
  overflow: hidden;
}

.combo i {
  flex: 1;
  padding-left: 5px;
  line-height: 21px;
  font-size: 10px;
  color: #444;
}

.combo i.plain {
  font-style: normal;
}

.combo em {
  width: 23px;
  background-color: #efeeec;
  border-left: 1px solid #d6d5d2;
  position: relative;
}

.combo em::after {
  content: "";
  position: absolute;
  left: 7px;
  top: 9px;
  border-top: 4px solid #333;
  border-left: 4px solid transparent;
  border-right: 4px solid transparent;
}

.font {
  width: 136px;
  margin-right: 7px;
}

.size {
  width: 66px;
  margin-right: 6px;
}

.name {
  width: 107px;
}

/* Main area */
.work {
  flex: 1;
  display: flex;
  min-height: 0;
}

.main {
  width: 1162px;
  display: flex;
  flex-direction: column;
}

.formula {
  height: 27px;
  display: flex;
  align-items: flex-start;
  padding-left: 3px;
  background-color: #f5f4f2;
}

.f-fx {
  width: 16px;
  margin-left: 6px;
  font-family: "Liberation Serif", serif;
  font-style: italic;
  font-size: 15px;
  line-height: 23px;
  color: #3b8ccb;
  text-align: center;
}

.f-sum {
  width: 16px;
  margin-left: 1px;
  font-size: 14px;
  line-height: 22px;
  color: #555;
  text-align: center;
}

.formula .d {
  width: 9px;
}

.f-eq {
  width: 12px;
  margin-left: 2px;
  font-size: 16px;
  font-weight: 600;
  line-height: 22px;
  color: #444;
  text-align: center;
}

.f-input {
  width: 973px;
  height: 16px;
  margin: 4px 0 0 2px;
  background-color: #fff;
  border: 1px solid #e0dfdc;
  padding-left: 8px;
  font-size: 8.700px;
  line-height: 14px;
  color: #555;
  white-space: pre;
}

.f-more {
  margin-left: 2px;
}

/* Sheet */
.sheet-wrap {
  height: 532px;
  display: flex;
}

.sheet {
  --cols: 22px 14px 133px 105px 19px 133px 106px 18px repeat(15, 41.250px);
  position: relative;
  width: 1152px;
  overflow: hidden;
  background-color: #fff;
  background-repeat: no-repeat;
  background-image:
    linear-gradient(#ddd, #ddd), linear-gradient(#ddd, #ddd), linear-gradient(#ddd, #ddd),
    linear-gradient(#ddd, #ddd), linear-gradient(#ddd, #ddd), linear-gradient(#ddd, #ddd),
    linear-gradient(#ddd, #ddd),
    repeating-linear-gradient(90deg, transparent 0 40.250px, #ddd 40.250px 41.250px);
  background-size:
    1px 100%, 1px 100%, 1px 100%, 1px 100%, 1px 100%, 1px 100%, 1px 100%,
    620px 100%;
  background-position:
    35px 0, 168px 0, 273px 0, 292px 0, 425px 0, 531px 0, 549px 0,
    550px 0;
}

.row {
  display: grid;
  grid-template-columns: var(--cols);
  height: 18px;
  border-bottom: 1px solid #ddd;
}

.h13 { height: 13px; }
.h14 { height: 14px; }
.h19 { height: 19px; }
.h20 { height: 20px; }
.h25 { height: 25px; }
.h26 { height: 26px; }
.h39 { height: 39px; }

.colhead {
  height: 14px;
  border-bottom: none;
  background-color: #fff;
}

.corner {
  background-color: #f0efed;
}

.ch {
  background-color: #e4e3e1;
  border-right: 1px solid #cfcecc;
  border-bottom: 1px solid #cfcecc;
  text-align: center;
  font-size: 9px;
  line-height: 13px;
  color: #555;
}

.ch.sel {
  background-color: #2f7de1;
  border-color: #2a6fc8;
  color: #fff;
  font-weight: 600;
}

.rh {
  grid-column: 1;
  background-color: #e9e8e6;
  border-right: 1px solid #cfcecc;
  display: flex;
  align-items: center;
  justify-content: center;
  font-size: 9.500px;
  color: #555;
  margin-bottom: -1px;
  border-bottom: 1px solid #cfcecc;
}

.rh.sel {
  background-color: #2f7de1;
  border-color: #2a6fc8;
  color: #fff;
  font-weight: 600;
}

.cell {
  display: flex;
  align-items: center;
  font-family: Lato, "Liberation Sans", sans-serif;
  white-space: pre;
  overflow: hidden;
}

.col-b { grid-column: 3; }
.col-c { grid-column: 4; }
.col-e { grid-column: 6; }
.col-f { grid-column: 7; }
.span-ag { grid-column: 2 / 9; justify-content: center; }
.span-bc { grid-column: 3 / 5; justify-content: center; }
.span-ef { grid-column: 6 / 8; justify-content: center; }

/* red spell-check squiggle */
.sp {
  text-decoration: underline wavy #d8232a;
  text-decoration-thickness: 1px;
  text-underline-offset: .5px;
}

.title {
  position: relative;
  overflow: visible;
  background-color: #0f766e;
  color: #fff;
  font-size: 15.500px;
  font-weight: 700;
  padding-left: 6px;
  box-shadow: inset 0 0 0 1px #8fc0ec;
}

/* Lato is wider than the sheet's Calibri */
.narrow {
  display: inline-block;
  transform: scaleX(.877);
}

.title::after {
  content: "";
  position: absolute;
  right: -3px;
  bottom: -3px;
  width: 5px;
  height: 5px;
  background-color: #2f7de1;
  border: 1px solid #fff;
}

.sub {
  background-color: #14b8a6;
  color: #e6fffa;
  font-size: 8.400px;
  letter-spacing: -.1px;
}

.head {
  color: #fff;
  font-size: 9.500px;
  letter-spacing: -.3px;
  font-weight: 700;
}

.head.small {
  font-size: 9px;
  letter-spacing: -.2px;
}

.head.small2 {
  font-size: 9.200px;
  letter-spacing: -.35px;
}

.tofu {
  display: inline-block;
  width: 5px;
  height: 7px;
  border: 1px solid rgba(255, 255, 255, .6);
  font-size: 5px;
  line-height: 5px;
  text-align: center;
  font-family: "Noto Sans", sans-serif;
  margin-right: 4px;
}

.warn {
  font-family: "DejaVu Sans", sans-serif;
  font-size: 10px;
  font-weight: normal;
  margin-right: 4px;
}

.teal { background-color: #14b8a6; }
.dteal { background-color: #0f766e; }
.amber { background-color: #b45309; }
.violet { background-color: #7c3aed; }
.ocean { background-color: #0e7490; }

.lab {
  padding-left: 1px;
  color: #f4f7fb;
  font-size: 8.600px;
  letter-spacing: -.25px;
  font-weight: 700;
}

.navy { background-color: #1e3a5f; }
.forest { background-color: #14532d; }
.brown { background-color: #78350f; }
.purple { background-color: #4c1d95; }
.wine { background-color: #7f1d1d; }

.val {
  justify-content: flex-end;
  padding-right: 2px;
  font-size: 9.600px;
  letter-spacing: -.2px;
  font-weight: 700;
}

.val.big {
  font-size: 10.500px;
}

.blue1 { background-color: #eff6ff; color: #1d4ed8; }
.blue2 { background-color: #dbeafe; color: #1d4ed8; }
.green { background-color: #dcfce7; color: #166534; }
.cream { background-color: #fef3c7; color: #92400e; }
.lilac { background-color: #ede9fe; color: #6d28d9; }
.sky { background-color: #e0f2fe; color: #0369a1; }
.rose { background-color: #fee2e2; color: #b91c1c; }

.item {
  padding-left: 1px;
  font-size: 8.800px;
  letter-spacing: -.2px;
  color: #333;
}

.amt {
  justify-content: flex-end;
  padding-right: 2px;
  font-size: 8.400px;
  letter-spacing: -.25px;
  font-weight: 700;
  color: #333;
}

.mint {
  background-color: #f0fdfa;
}

/* Chart object */
.chart {
  position: absolute;
  left: 293px;
  top: 307px;
  width: 437px;
  height: 225px;
  background-color: #fff;
  border: 1px solid #e2e2e2;
  border-bottom: none;
  font-family: Lato, "Liberation Sans", sans-serif;
}

.c-title {
  font-size: 15px;
  letter-spacing: -.15px;
  font-weight: 700;
  fill: #111;
}

.c-grid path {
  stroke: #b5b5b5;
  fill: none;
}

.c-axis {
  stroke: #777;
  fill: none;
}

.c-bar rect,
.c-key {
  fill: #0f766e;
}

.c-label {
  font-size: 8.300px;
  fill: #222;
}

.c-ytitle {
  font-size: 8px;
  font-weight: 700;
  fill: #111;
}

/* Scrollbars */
.vscroll {
  width: 10px;
  background-color: #c9c9c9;
  padding: 5px 2px 0 1px;
}

.vthumb {
  height: 251px;
  background-color: #8d8d8d;
  border-radius: 3px;
}

.hscroll {
  height: 9px;
  background-color: #cbcbcb;
  margin-right: 12px;
  padding: 1px 0 1px 2px;
  border-right: 1px solid #777;
}

.hthumb {
  width: 544px;
  height: 100%;
  background-color: #8a8a8a;
  border-radius: 3px;
}

/* Sheet tabs */
.tabs {
  height: 17px;
  display: flex;
  align-items: center;
  padding-left: 6px;
}

.tabnav {
  width: 60px;
  height: 14px;
  flex: none;
}

.addtab {
  width: 16px;
  height: 16px;
  margin-left: 8px;
  flex: none;
}

.tab {
  height: 15px;
  line-height: 15px;
  padding: 0;
  text-align: center;
  font-size: 8px;
  flex: none;
}

.t-cur {
  width: 55px;
  margin-left: 1px;
  background-color: #fff;
  border-bottom: 2px solid #0f766e;
  font-size: 8.200px;
  font-weight: 700;
  color: #222;
  line-height: 13px;
}

.t-blue {
  width: 96px;
  background-color: #1d4ed8;
  color: #cfe0ff;
}

.t-orange {
  width: 81px;
  background-color: #f59e0b;
  color: #4a3200;
}

.t-purple {
  width: 52px;
  background-color: #7c3aed;
  color: #eadfff;
}

/* Sidebar */
.sidebar {
  position: relative;
  width: 38px;
  border-left: 1px solid #e4e3e1;
  display: flex;
  flex-direction: column;
  align-items: center;
  padding-top: 4px;
  gap: 12px;
}

.sidebar svg {
  width: 17px;
  height: 17px;
  flex: none;
}

.side-fx {
  font-family: "Liberation Serif", serif;
  font-style: italic;
  font-size: 17px;
  line-height: 17px;
  color: #3b8ccb;
}

.grip {
  position: absolute;
  left: -1px;
  top: 266px;
  width: 5px;
  height: 50px;
  background-color: #a6a6a6;
}

.grip::after {
  content: "";
  position: absolute;
  left: 1px;
  top: 23px;
  width: 3px;
  height: 3px;
  background-color: #fff;
}

/* Status bar */
.status {
  height: 17px;
  display: flex;
  border-top: 1px solid #e4e3e1;
  font-size: 8.100px;
  color: #555;
  flex: none;
}

.st {
  height: 100%;
  display: flex;
  align-items: center;
  justify-content: center;
  border-right: 1px solid #e0dfdd;
  flex: none;
}

.st1 { width: 181px; justify-content: flex-start; padding-left: 5px; font-size: 8.400px; }
.st1 svg { width: 13px; height: 13px; margin-right: 9px; }
.st2 { width: 220px; justify-content: flex-start; padding-left: 6px; }
.st3 { width: 197px; justify-content: flex-start; padding-left: 6px; }
.st4 { width: 172px; }
.st5 { width: 81px; gap: 2px; justify-content: flex-end; padding-right: 10px; }
.st6 { width: 14px; }
.st7 { width: 21px; }
.st8 { width: 185px; }
.st9 { width: 97px; gap: 5px; }
.st10 { width: 32px; border-right: none; }

.insbox {
  width: 12px;
  height: 8px;
  background-color: #e3f0fa;
  border: 1px solid #3b8ccb;
}

.cursor {
  font-family: "Liberation Serif", serif;
  font-size: 13px;
  color: #333;
}

.zm {
  font-size: 12px;
  font-weight: bold;
  color: #444;
}

.slider {
  position: relative;
  width: 64px;
  height: 1px;
  background-color: #777;
}

.slider i {
  position: absolute;
  left: 29px;
  top: -3px;
  width: 3px;
  height: 7px;
  background-color: #eee;
  border: 1px solid #666;
}
```
